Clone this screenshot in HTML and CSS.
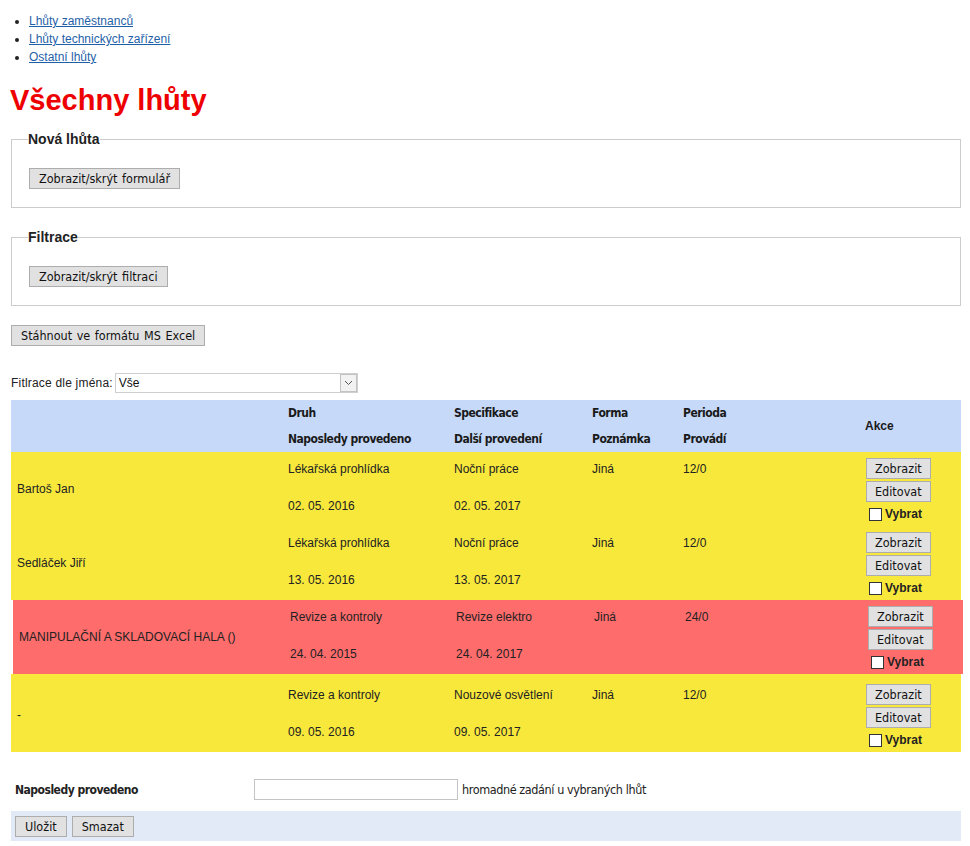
FILE: index.html
```html
<!DOCTYPE html>
<html lang="cs">
<head>
<meta charset="utf-8">
<title>Všechny lhůty</title>
<link rel="stylesheet" href="styles.css">
</head>
<body>
<div class="page">
  <ul class="nav">
    <li><a href="#">Lhůty zaměstnanců</a></li>
    <li><a href="#">Lhůty technických zařízení</a></li>
    <li><a href="#">Ostatní lhůty</a></li>
  </ul>

  <h1 class="title">Všechny lhůty</h1>

  <fieldset class="box">
    <legend>Nová lhůta</legend>
    <button class="btn">Zobrazit/skrýt formulář</button>
  </fieldset>

  <fieldset class="box box-second">
    <legend>Filtrace</legend>
    <button class="btn">Zobrazit/skrýt filtraci</button>
  </fieldset>

  <div class="export">
    <button class="btn">Stáhnout ve formátu MS Excel</button>
  </div>

  <div class="filter">
    <label class="filter-label">Fitlrace dle jména:</label>
    <span class="select-wrap">
      <select class="select"><option>Vše</option></select>
      <span class="select-arrow"><svg width="9" height="6" viewBox="0 0 9 6"><path d="M1 1 L4.5 4.5 L8 1" fill="none" stroke="#555" stroke-width="1"/></svg></span>
    </span>
  </div>

  <div class="grid">
    <div class="row head">
      <div class="cell"></div>
      <div class="cell lines"><div class="hl">Druh</div><div class="hl">Naposledy provedeno</div></div>
      <div class="cell lines"><div class="hl">Specifikace</div><div class="hl">Další provedení</div></div>
      <div class="cell lines"><div class="hl">Forma</div><div class="hl">Poznámka</div></div>
      <div class="cell lines"><div class="hl">Perioda</div><div class="hl">Provádí</div></div>
      <div class="cell akce">Akce</div>
    </div>

    <div class="row yellow">
      <div class="cell name">Bartoš Jan</div>
      <div class="cell lines"><div class="ln">Lékařská prohlídka</div><div class="ln">02. 05. 2016</div></div>
      <div class="cell lines"><div class="ln">Noční práce</div><div class="ln">02. 05. 2017</div></div>
      <div class="cell lines"><div class="ln">Jiná</div><div class="ln"></div></div>
      <div class="cell lines"><div class="ln">12/0</div><div class="ln"></div></div>
      <div class="cell actions">
        <button class="btn btn-act">Zobrazit</button>
        <button class="btn btn-act">Editovat</button>
        <label class="pick"><input type="checkbox" class="chk"><span>Vybrat</span></label>
      </div>
    </div>

    <div class="row yellow">
      <div class="cell name">Sedláček Jiří</div>
      <div class="cell lines"><div class="ln">Lékařská prohlídka</div><div class="ln">13. 05. 2016</div></div>
      <div class="cell lines"><div class="ln">Noční práce</div><div class="ln">13. 05. 2017</div></div>
      <div class="cell lines"><div class="ln">Jiná</div><div class="ln"></div></div>
      <div class="cell lines"><div class="ln">12/0</div><div class="ln"></div></div>
      <div class="cell actions">
        <button class="btn btn-act">Zobrazit</button>
        <button class="btn btn-act">Editovat</button>
        <label class="pick"><input type="checkbox" class="chk"><span>Vybrat</span></label>
      </div>
    </div>

    <div class="row red">
      <div class="cell name">MANIPULAČNÍ A SKLADOVACÍ HALA ()</div>
      <div class="cell lines"><div class="ln">Revize a kontroly</div><div class="ln">24. 04. 2015</div></div>
      <div class="cell lines"><div class="ln">Revize elektro</div><div class="ln">24. 04. 2017</div></div>
      <div class="cell lines"><div class="ln">Jiná</div><div class="ln"></div></div>
      <div class="cell lines"><div class="ln">24/0</div><div class="ln"></div></div>
      <div class="cell actions">
        <button class="btn btn-act">Zobrazit</button>
        <button class="btn btn-act">Editovat</button>
        <label class="pick"><input type="checkbox" class="chk"><span>Vybrat</span></label>
      </div>
    </div>

    <div class="row yellow last">
      <div class="cell name">-</div>
      <div class="cell lines"><div class="ln">Revize a kontroly</div><div class="ln">09. 05. 2016</div></div>
      <div class="cell lines"><div class="ln">Nouzové osvětlení</div><div class="ln">09. 05. 2017</div></div>
      <div class="cell lines"><div class="ln">Jiná</div><div class="ln"></div></div>
      <div class="cell lines"><div class="ln">12/0</div><div class="ln"></div></div>
      <div class="cell actions">
        <button class="btn btn-act">Zobrazit</button>
        <button class="btn btn-act">Editovat</button>
        <label class="pick"><input type="checkbox" class="chk"><span>Vybrat</span></label>
      </div>
    </div>
  </div>

  <div class="bulk">
    <div class="bulk-label">Naposledy provedeno</div>
    <input type="text" class="bulk-input">
    <div class="bulk-note">hromadné zadání u vybraných lhůt</div>
  </div>

  <div class="bar">
    <button class="btn">Uložit</button>
    <button class="btn">Smazat</button>
  </div>
</div>
</body>
</html>
```

FILE: styles.css
```css
html, body {
  margin: 0;
  padding: 0;
  background: #ffffff;
}

body {
  font-family: "Liberation Sans", Arial, sans-serif;
  font-size: 12px;
  color: #222222;
}

.page {
  width: 950px;
  margin-left: 11px;
}

/* top navigation */
.nav {
  margin: 12px 0 0 0;
  padding: 0 0 0 18px;
  line-height: 18px;
}

.nav a {
  color: #1f5fa8;
  text-decoration: underline;
}

.title {
  margin: 17px 0 0 -1px;
  font-size: 29px;
  line-height: 34px;
  font-weight: bold;
  color: #ee0000;
}

/* fieldsets */
.box {
  margin: 14px 0 0 0;
  padding: 21px 16px 18px 16px;
  border: 1px solid #cccccc;
  box-sizing: border-box;
  width: 950px;
  min-width: 0;
}

.box-second {
  margin-top: 21px;
}

.box legend {
  padding: 0;
  font-size: 14px;
  line-height: 16px;
  font-weight: bold;
  color: #222222;
}

.box .btn {
  margin-left: 1px;
}

/* buttons */
.btn {
  font-family: "DejaVu Sans Condensed", "DejaVu Sans", sans-serif;
  font-stretch: condensed;
  font-size: 12.5px;
  word-spacing: 1px;
  line-height: 19px;
  height: 21px;
  padding: 0 9px;
  margin: 0;
  background: #e1e1e1;
  border: 1px solid #adadad;
  border-radius: 0;
  color: #111111;
  box-sizing: border-box;
  display: inline-block;
  vertical-align: top;
}

.export {
  margin-top: 19px;
}

/* filter */
.filter {
  margin-top: 27px;
  display: flex;
  align-items: center;
  height: 20px;
}

.filter-label {
  margin-right: 2px;
  letter-spacing: 0.2px;
}

.select-wrap {
  position: relative;
  display: inline-block;
  width: 243px;
  height: 20px;
}

.select {
  appearance: none;
  -webkit-appearance: none;
  width: 243px;
  height: 20px;
  margin: 0;
  padding: 0 0 0 3px;
  border: 1px solid #cfcfcf;
  border-radius: 0;
  background: #ffffff;
  font-family: "Liberation Sans", Arial, sans-serif;
  font-size: 12px;
  color: #111111;
  box-sizing: border-box;
}

.select-arrow {
  position: absolute;
  right: 1px;
  top: 1px;
  width: 15px;
  height: 16px;
  border: 1px solid #c3c3c3;
  background: #f2f2f2;
  display: flex;
  align-items: center;
  justify-content: center;
  pointer-events: none;
}

/* list grid */
.grid {
  margin-top: 7px;
  width: 950px;
}

.row {
  display: grid;
  grid-template-columns: 271px 166px 138px 91px 182px 102px;
  width: 950px;
}

.cell {
  padding-left: 6px;
  box-sizing: border-box;
}

.head {
  background: #c6d9f9;
  height: 52px;
}

.hl {
  font-family: "Liberation Sans Narrow", "DejaVu Sans Condensed", sans-serif;
  font-weight: bold;
  font-size: 12px;
  letter-spacing: -0.5px;
  line-height: 26px;
  color: #1a1a1a;
  white-space: nowrap;
}

.akce {
  align-self: center;
  font-weight: bold;
  font-size: 12px;
  color: #1a1a1a;
}

.yellow {
  background: #f8e83b;
}

.red {
  background: #ff6c6c;
  margin-left: 2px;
  margin-right: -2px;
}

.last {
  padding-top: 4px;
}

.name {
  align-self: center;
  white-space: nowrap;
}

.ln {
  height: 37px;
  line-height: 34px;
  white-space: nowrap;
}

.actions {
  padding: 6px 0 4px 7px;
  display: flex;
  flex-direction: column;
  align-items: flex-start;
}

.btn-act {
  margin-bottom: 2px;
  padding: 0 8px;
}

.pick {
  display: flex;
  align-items: center;
  margin-top: 2px;
  margin-left: 3px;
  height: 16px;
  font-weight: bold;
  font-size: 12px;
  color: #222222;
}

.chk {
  appearance: none;
  -webkit-appearance: none;
  width: 13px;
  height: 13px;
  margin: 0 3px 0 0;
  border: 1px solid #333333;
  background: #ffffff;
  box-sizing: border-box;
  border-radius: 0;
}

/* bulk edit */
.bulk {
  margin-top: 27px;
  display: grid;
  grid-template-columns: 243px 204px auto;
  align-items: center;
  height: 21px;
}

.bulk-label {
  padding-left: 4px;
  font-family: "Liberation Sans Narrow", "DejaVu Sans Condensed", sans-serif;
  font-weight: bold;
  font-size: 12px;
  letter-spacing: -0.5px;
}

.bulk-input {
  width: 204px;
  height: 21px;
  margin: 0;
  padding: 0;
  border: 1px solid #c4c4c4;
  box-sizing: border-box;
}

.bulk-note {
  padding-left: 4px;
  font-family: "Liberation Sans Narrow", "DejaVu Sans Condensed", sans-serif;
  font-size: 12.5px;
  letter-spacing: -0.4px;
}

.bar {
  margin-top: 11px;
  height: 30px;
  background: #e2eaf7;
  display: flex;
  align-items: center;
  gap: 5px;
  padding-left: 4px;
  box-sizing: border-box;
}
```
